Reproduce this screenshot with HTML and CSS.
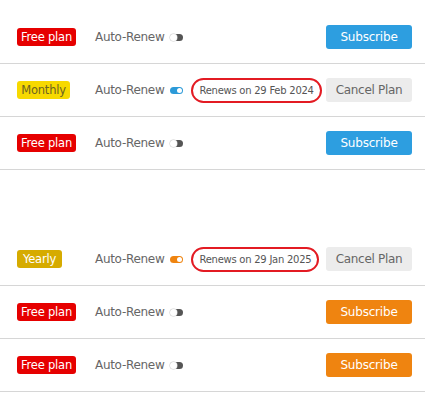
FILE: index.html
```html
<!DOCTYPE html>
<html>
<head>
<meta charset="utf-8">
<link rel="stylesheet" href="styles.css">
</head>
<body>
<div class="plans">
  <div class="group">
    <div class="row">
      <span class="badge free">Free plan</span>
      <span class="auto">Auto-Renew <span class="toggle off"></span></span>
      <span class="fill"></span>
      <button class="btn sub blue">Subscribe</button>
    </div>
    <div class="row">
      <span class="badge monthly">Monthly</span>
      <span class="auto">Auto-Renew <span class="toggle on blue-t"></span></span>
      <span class="pill">Renews on 29 Feb 2024</span>
      <span class="fill"></span>
      <button class="btn cancel">Cancel Plan</button>
    </div>
    <div class="row">
      <span class="badge free">Free plan</span>
      <span class="auto">Auto-Renew <span class="toggle off"></span></span>
      <span class="fill"></span>
      <button class="btn sub blue">Subscribe</button>
    </div>
  </div>
  <div class="group second">
    <div class="row">
      <span class="badge yearly">Yearly</span>
      <span class="auto">Auto-Renew <span class="toggle on orange-t"></span></span>
      <span class="pill">Renews on 29 Jan 2025</span>
      <span class="fill"></span>
      <button class="btn cancel">Cancel Plan</button>
    </div>
    <div class="row">
      <span class="badge free">Free plan</span>
      <span class="auto">Auto-Renew <span class="toggle off"></span></span>
      <span class="fill"></span>
      <button class="btn sub orange">Subscribe</button>
    </div>
    <div class="row">
      <span class="badge free">Free plan</span>
      <span class="auto">Auto-Renew <span class="toggle off"></span></span>
      <span class="fill"></span>
      <button class="btn sub orange">Subscribe</button>
    </div>
  </div>
</div>
</body>
</html>
```

FILE: styles.css
```css
html, body {
  margin: 0;
  padding: 0;
  background: #fff;
}
body {
  font-family: "DejaVu Sans", "Open Sans", sans-serif;
  color: #666;
}
.plans {
  width: 425px;
  padding-top: 11px;
  display: flex;
  flex-direction: column;
}
.group.second {
  margin-top: 63px;
}
.row {
  height: 52px;
  border-bottom: 1px solid #d6d6d6;
  display: flex;
  align-items: center;
  padding: 0 13px 0 17px;
}
.badge {
  display: inline-flex;
  align-items: center;
  justify-content: center;
  height: 18px;
  padding: 0;
  border-radius: 3px;
  font-size: 11.5px;
  letter-spacing: -0.2px;
  box-sizing: border-box;
  flex: none;
}
.badge.free {
  background: #e60000;
  color: #fff;
  width: 59px;
  margin-right: 19px;
}
.badge.monthly {
  background: #f7d900;
  color: #6d6420;
  width: 53px;
  margin-right: 25px;
}
.badge.yearly {
  background: #d6ab00;
  color: #fff;
  width: 45px;
  margin-right: 33px;
}
.auto {
  font-size: 12px;
  letter-spacing: -0.3px;
  color: #666;
  display: inline-flex;
  align-items: center;
  gap: 6px;
}
.toggle {
  display: inline-block;
  width: 13px;
  height: 7px;
  border-radius: 4px;
  position: relative;
  box-sizing: border-box;
}
.toggle.off {
  background: #555;
}
.toggle.off::after {
  content: "";
  position: absolute;
  left: 0;
  top: 0;
  width: 7px;
  height: 7px;
  border-radius: 50%;
  background: #fff;
  box-shadow: 0 0 0 0.5px #ccc;
}
.toggle.on::after {
  content: "";
  position: absolute;
  right: 1px;
  top: 1px;
  width: 5px;
  height: 5px;
  border-radius: 50%;
  background: #fff;
}
.toggle.blue-t { background: #2c9ad8; }
.toggle.orange-t { background: #ef8410; }
.pill {
  margin-left: 8px;
  height: 25px;
  box-sizing: border-box;
  border: 2px solid #e31b23;
  border-radius: 13px;
  display: inline-flex;
  align-items: center;
  padding: 0 6px;
  font-size: 10px;
  letter-spacing: -0.25px;
  color: #555;
}
.fill { flex: 1; }
.btn {
  width: 86px;
  height: 24px;
  border: none;
  border-radius: 3px;
  font-family: inherit;
  font-size: 12px;
  letter-spacing: -0.2px;
  padding: 0;
  cursor: pointer;
  flex: none;
}
.btn.sub { color: #fff; }
.btn.blue { background: #2d9ee0; }
.btn.orange { background: #ef8410; }
.btn.cancel {
  background: #ececec;
  color: #666;
  letter-spacing: -0.3px;
}
```
